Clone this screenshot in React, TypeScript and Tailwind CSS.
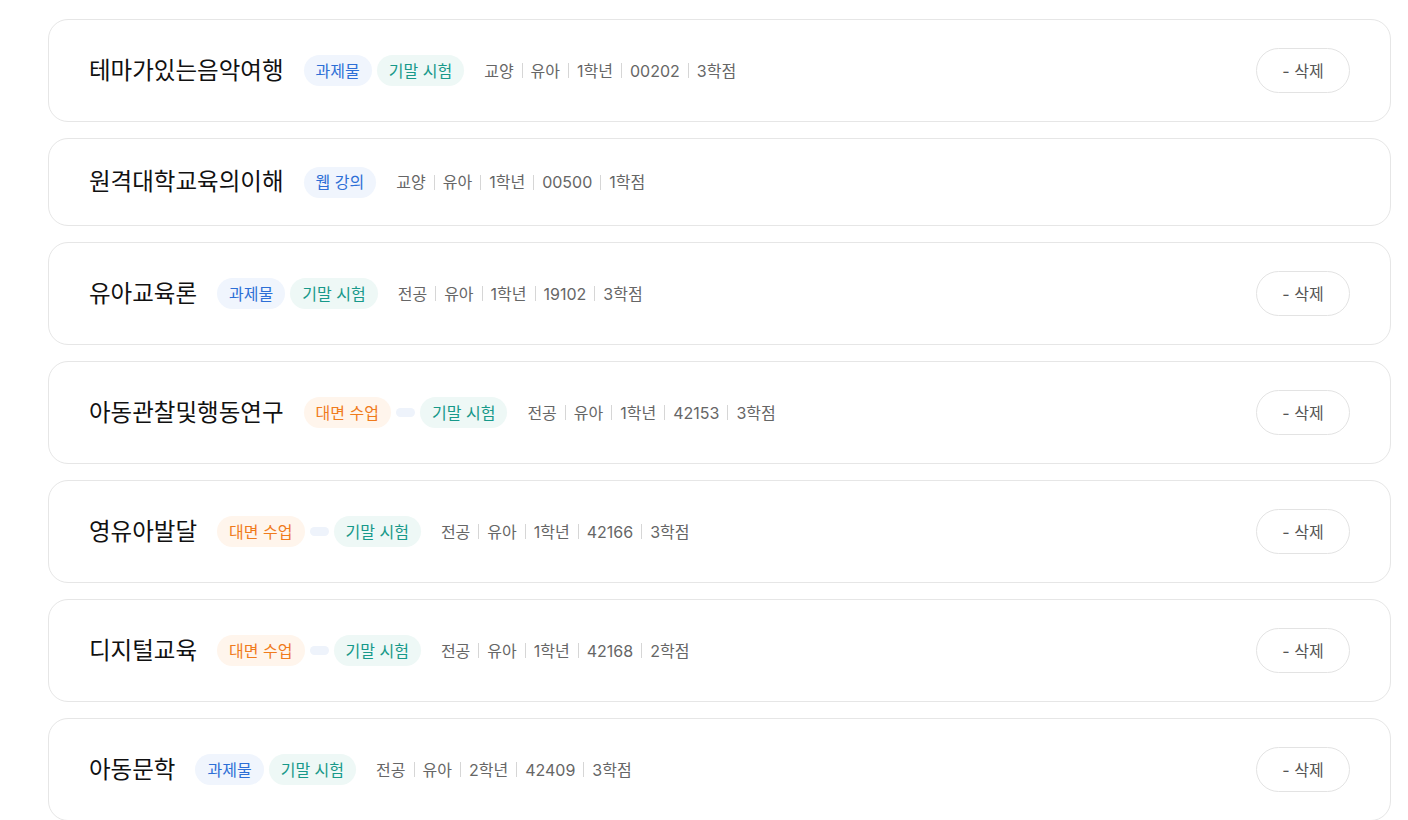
import cn from "clsx";

type TagKind = "assignment" | "final" | "offline" | "web" | "dot";

type Course = {
  title: string;
  tags: TagKind[];
  meta: string[];
  deletable: boolean;
};

const courses: Course[] = [
  {
    title: "테마가있는음악여행",
    tags: ["assignment", "final"],
    meta: ["교양", "유아", "1학년", "00202", "3학점"],
    deletable: true,
  },
  {
    title: "원격대학교육의이해",
    tags: ["web"],
    meta: ["교양", "유아", "1학년", "00500", "1학점"],
    deletable: false,
  },
  {
    title: "유아교육론",
    tags: ["assignment", "final"],
    meta: ["전공", "유아", "1학년", "19102", "3학점"],
    deletable: true,
  },
  {
    title: "아동관찰및행동연구",
    tags: ["offline", "dot", "final"],
    meta: ["전공", "유아", "1학년", "42153", "3학점"],
    deletable: true,
  },
  {
    title: "영유아발달",
    tags: ["offline", "dot", "final"],
    meta: ["전공", "유아", "1학년", "42166", "3학점"],
    deletable: true,
  },
  {
    title: "디지털교육",
    tags: ["offline", "dot", "final"],
    meta: ["전공", "유아", "1학년", "42168", "2학점"],
    deletable: true,
  },
  {
    title: "아동문학",
    tags: ["assignment", "final"],
    meta: ["전공", "유아", "2학년", "42409", "3학점"],
    deletable: true,
  },
];

const tagStyles: Record<TagKind, { label: string; className: string }> = {
  assignment: { label: "과제물", className: "bg-[#f0f5fd] text-[#2d6fd6]" },
  final: { label: "기말 시험", className: "bg-[#eef8f6] text-[#17998a]" },
  offline: { label: "대면 수업", className: "bg-[#fff5ec] text-[#f07b1c]" },
  web: { label: "웹 강의", className: "bg-[#f0f5fd] text-[#2d6fd6]" },
  dot: { label: "", className: "" },
};

const Tag = ({ kind }: { kind: TagKind }) => {
  if (kind === "dot") {
    return <span className="h-[9px] w-[19px] rounded-full bg-[#eef3fb]" />;
  }
  const style = tagStyles[kind];
  return (
    <span
      className={cn(
        "flex h-[31px] items-center rounded-full px-3 text-[16px] leading-none",
        style.className
      )}
    >
      {style.label}
    </span>
  );
};

const CourseCard = ({ course }: { course: Course }) => {
  return (
    <div className="flex items-center rounded-[20px] border border-[#e6e6e6] bg-white py-7 pl-10 pr-10">
      <div className="flex h-[30px] flex-1 items-center">
        <h3 className="text-[23.5px] leading-[30px] text-[#111]">
          {course.title}
        </h3>
        <div className="ml-5 flex items-center gap-[5px]">
          {course.tags.map((t, i) => (
            <Tag key={i} kind={t} />
          ))}
        </div>
        <div className="ml-5 flex items-center text-[16px] leading-6 text-[#666]">
          {course.meta.map((m, i) => (
            <div key={i} className="flex items-center">
              {i > 0 ? (
                <span className="mx-2 h-[15px] w-px bg-[#d6d6d6]" />
              ) : null}
              <span>{m}</span>
            </div>
          ))}
        </div>
      </div>
      {course.deletable ? (
        <button
          type="button"
          className="h-[45px] w-[94px] rounded-full border border-[#e3e3e3] bg-white text-[16px] text-[#555]"
        >
          - 삭제
        </button>
      ) : null}
    </div>
  );
};

export default function App() {
  return (
    <div
      className="min-h-screen bg-white pl-12 pr-[17px] pt-[19px]"
      style={{ fontFamily: 'Inter, "Noto Sans CJK KR", "Noto Sans", sans-serif' }}
    >
      <div className="flex flex-col gap-4">
        {courses.map((c) => (
          <CourseCard key={c.title} course={c} />
        ))}
      </div>
    </div>
  );
}
